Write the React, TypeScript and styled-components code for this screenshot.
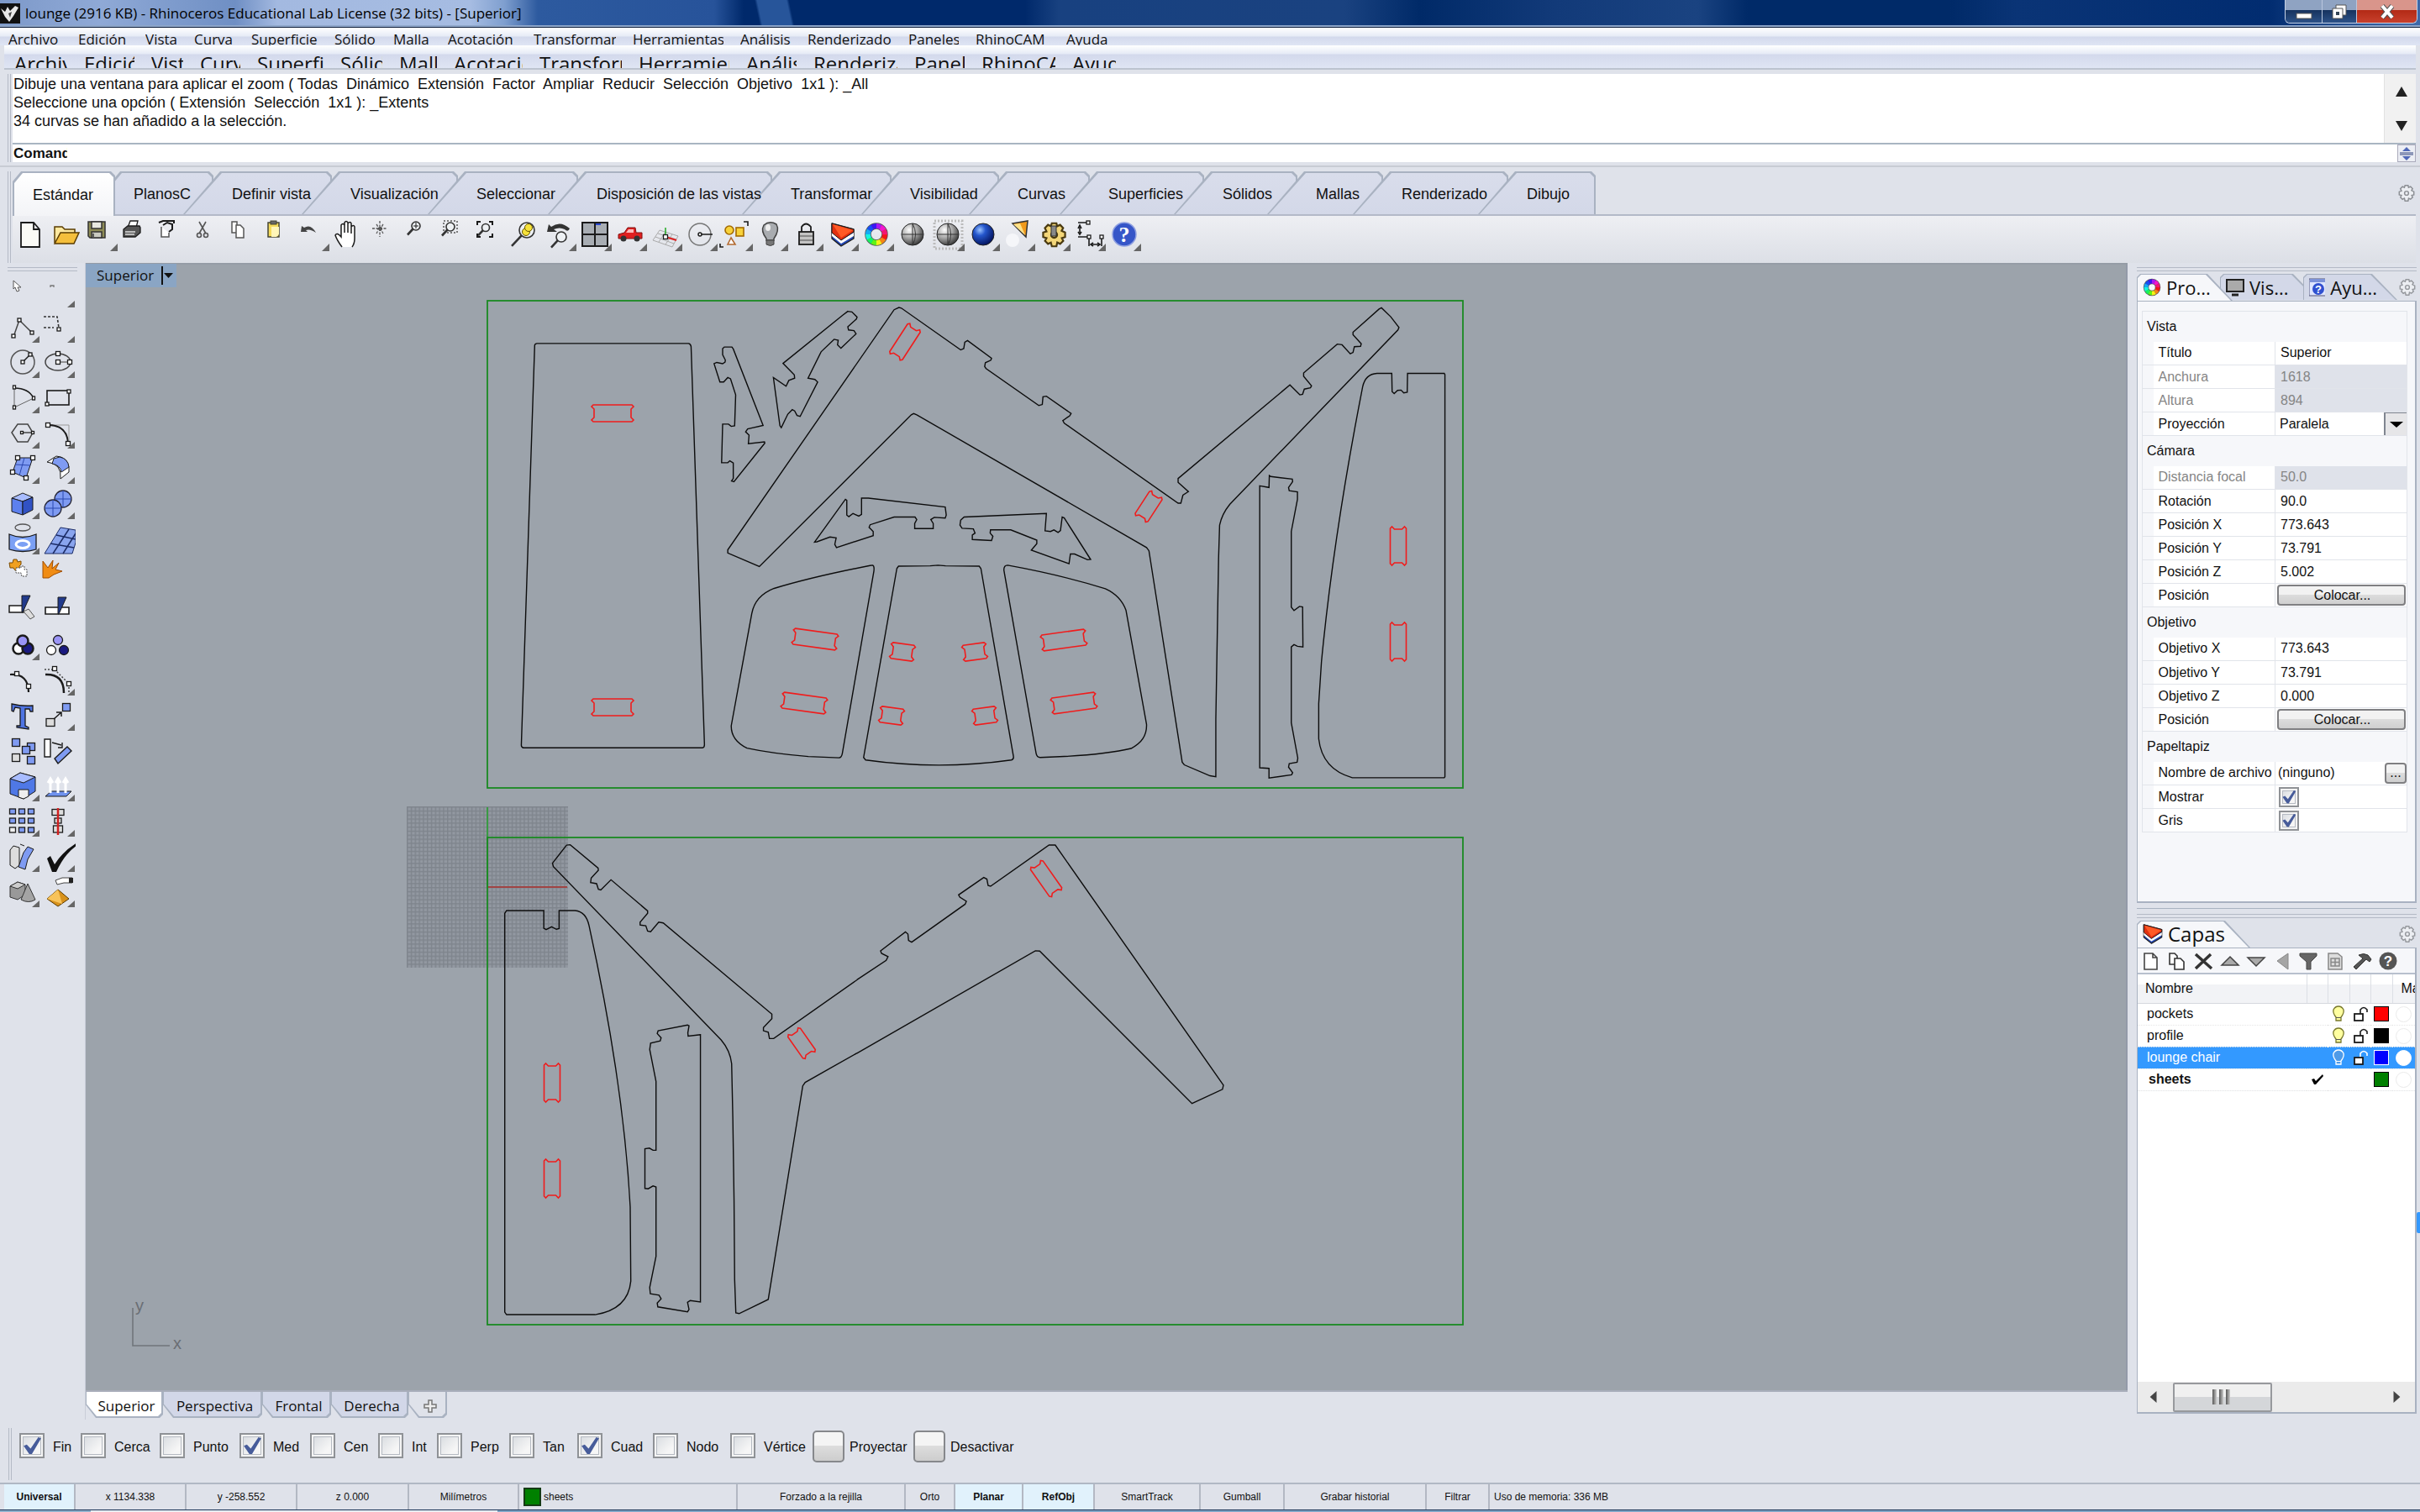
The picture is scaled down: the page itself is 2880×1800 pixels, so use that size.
import React from "react";
import styled, { createGlobalStyle, css } from "styled-components";

const sans = `"Liberation Sans", Arial, sans-serif`;
const ui = `"Open Sans", "Noto Sans", sans-serif`;
const edge = "#a9b2c1";
const face = "#dfe2ea";

const Global = createGlobalStyle`
  * { box-sizing: border-box; }
  html, body { margin: 0; background: ${face}; }
  body { font-family: ${sans}; font-size: 16px; color: #111; overflow: hidden; }
  button, input, select { font: inherit; color: inherit; margin: 0; padding: 0; border: 0; background: none; border-radius: 0; }
  svg { display: block; }
`;

const Page = styled.div`
  min-height: 100vh;
  display: flex;
  flex-direction: column;
  background: ${face};
  position: relative;
`;

/* ---------- title bar ---------- */

const TitleBar = styled.header`
  height: 33px;
  display: flex;
  align-items: center;
  gap: 6px;
  font: 17px/24px ${ui};
  color: #000;
  border-bottom: 1px solid #10203c;
  box-shadow: inset 0 -2px 0 #8ea6c9;
  background:
    linear-gradient(78deg, transparent 885px, #27559a 888px, #27559a 922px, transparent 925px),
    linear-gradient(90deg, #7d99c9 0, #8fa9d6 120px, #6f8fc4 280px, #a3b9e0 330px, #a6bce2 560px, #7f9fcf 600px, #2d5a9f 640px, #27539a 850px, #00296b 885px, #00296b 1220px, #184180 1260px, #1a4280 1600px, #002a68 1690px, #123a79 1850px, #1a4381 2020px, #002a68 2080px, #002a68 2320px, #0a3476 2400px, #012c70 2700px, #3d68a8 2860px);
`;
const Title = styled.h1`
  flex: 1;
  margin: 0;
  font: inherit;
  white-space: nowrap;
`;
const WindowButtons = styled.div`
  align-self: flex-start;
  display: flex;
  height: 28px;
  margin-right: 3px;
  border: 1px solid #c6d2e6;
  border-top: 0;
  border-radius: 0 0 6px 6px;
  overflow: hidden;
`;
const WindowButton = styled.button<{ $w: number; $close?: boolean }>`
  width: ${(p) => p.$w}px;
  display: grid;
  place-items: center;
  border-left: 1px solid #b9c7de;
  background: ${(p) =>
    p.$close
      ? "linear-gradient(#d9958b 0 45%, #b32a16 46%, #c8402c)"
      : "linear-gradient(#8fa3c2 0 45%, #16335f 46%, #2d5288)"};
  &:first-child { border-left: 0; }
`;

/* ---------- menus ---------- */

const MenuBar = styled.nav<{ $ghost?: boolean }>`
  display: flex;
  align-items: flex-start;
  overflow: hidden;
  white-space: nowrap;
  background: linear-gradient(#ffffff 0, #e6ebf6 10px, #d3d9ec 11px, #dfe5f4 100%);
  ${(p) =>
    p.$ghost
      ? css`
          height: 29px;
          margin: 0 5px;
          padding-left: 12px;
          border-bottom: 2px solid #bcc3cf;
          font: 24px/43px ${ui};
        `
      : css`
          height: 21px;
          padding-left: 10px;
          font: 17px/28px ${ui};
        `}
`;
const MenuItem = styled.button<{ $w: number }>`
  width: ${(p) => p.$w}px;
  flex: none;
  text-align: left;
  padding-right: 20px;
`;
const MenuClip = styled.span`
  display: block;
  overflow: hidden;
`;

/* ---------- command area ---------- */

const Dock = styled.section`
  display: flex;
  padding: 5px 5px 4px 9px;
  gap: 2px;
  border-bottom: 2px solid #c8ccd4;
`;
const Grip = styled.div<{ $row?: boolean }>`
  ${(p) =>
    p.$row
      ? css`height: 5px; border-top: 1px solid #b4bac6; border-bottom: 1px solid #b4bac6;`
      : css`width: 4px; border-left: 1px solid #b4bac6; border-right: 1px solid #b4bac6;`}
  flex: none;
`;
const CommandBox = styled.div`
  flex: 1;
  background: #fff;
  font-size: 18px;
`;
const History = styled.div`
  display: flex;
  height: 84px;
  border-bottom: 2px solid #a9b5c2;
`;
const Log = styled.div`
  flex: 1;
  padding: 1px 1px 0;
  line-height: 22px;
  white-space: pre;
`;
const ScrollRail = styled.div`
  width: 38px;
  background: #f1f1f1;
  border-left: 1px solid #e2e2e2;
  display: flex;
  flex-direction: column;
  justify-content: space-between;
  align-items: center;
  padding: 13px 0 12px 2px;
`;
const CommandLine = styled.div`
  display: flex;
  height: 21px;
  line-height: 22px;
  padding-left: 1px;
  label { width: 64px; overflow: hidden; font-weight: bold; font-size: 17px; }
  input { flex: 1; outline: 0; }
`;
const Stepper = styled.button`
  width: 22px;
  border: 1px solid #aab;
  background: #eceef4;
  display: grid;
  place-items: center;
`;

/* ---------- tabbed toolbar ---------- */

const ToolDock = styled.section`
  display: flex;
  padding: 5px 5px 0 9px;
  gap: 2px;
  position: relative;
`;
const ToolBody = styled.div`
  flex: 1;
  min-width: 0;
`;
const Tabs = styled.div`
  display: flex;
  align-items: stretch;
  height: 53px;
  border-bottom: 2px solid #b3b9c8;
`;
const Tab = styled.button<{ $w: number; $active?: boolean; $second?: boolean }>`
  position: relative;
  flex: none;
  width: ${(p) => p.$w}px;
  padding: 3px 0 0 ${(p) => (p.$active ? 24 : 22)}px;
  text-align: left;
  font-size: 18px;
  white-space: nowrap;
  ${(p) => p.$active && css`margin-bottom: -2px; z-index: 2;`}
  span { position: relative; z-index: 1; }
  &::before, &::after {
    content: "";
    position: absolute;
    inset: 0 0 0 ${(p) => (p.$active ? 0 : p.$second ? -4 : -36)}px;
    background: ${edge};
    --s: ${(p) => (p.$active || p.$second ? 10 : 44)}px;
    --b: ${(p) => (p.$active || p.$second ? "12px" : "100%")};
    clip-path: polygon(0 100%, 0 var(--b), var(--s) 0, calc(100% - 5px) 0, 100% 5px, 100% 100%);
  }
  &::after {
    top: 2px;
    right: 2px;
    margin-left: 2px;
    background: ${(p) => (p.$active ? "linear-gradient(#fff, #f3f4f7)" : "linear-gradient(#d9ddeb, #d3d8e8)")};
  }
`;
const Spacer = styled.div`flex: 1;`;
const IconButton = styled.button`
  display: grid;
  place-items: center;
  flex: none;
`;
const IconRow = styled.div`
  display: flex;
  height: 56px;
  align-items: flex-start;
  background: linear-gradient(#eeeff3, #dcdfe6);
`;

/* ---------- workspace ---------- */

const Workspace = styled.main`
  flex: 1;
  display: flex;
  min-height: 0;
`;
const SideTools = styled.aside`
  width: 102px;
  padding: 5px 9px 0;
  border-right: 1px solid #c9cdd8;
`;
const ToolGrid = styled.div`
  display: grid;
  grid-template-columns: 42px 42px;
  grid-auto-rows: 42px;
  margin: 3px -3px 0;
`;
const ViewColumn = styled.div`
  flex: 1;
  min-width: 0;
  display: flex;
  flex-direction: column;
`;
const Viewport = styled.div`
  flex: 1;
  position: relative;
  background: #9ca3ab;
  border-bottom: 2px solid #a8adba;
  box-shadow: inset 0 2px 0 #959ca6, inset -2px 0 0 #939aa8;
  overflow: hidden;
`;
const Drawing = styled.svg`
  position: absolute;
  inset: 0;
  width: 2430px;
  height: 1344px;
`;
const ViewName = styled.button`
  position: absolute;
  left: 0;
  top: 1px;
  height: 28px;
  width: 108px;
  display: flex;
  align-items: center;
  gap: 9px;
  padding-left: 13px;
  background: #8aa5c4;
  font: 17px/24px ${ui};
`;
const ViewTabs = styled.div`
  display: flex;
  height: 33px;
`;
const ViewTab = styled.button<{ $w: number; $tone: string }>`
  position: relative;
  width: ${(p) => p.$w}px;
  height: 31px;
  font: 17px/24px ${ui};
  padding: 3px 0 0 5px;
  &::before, &::after {
    content: "";
    position: absolute;
    inset: 0;
    background: ${edge};
    clip-path: polygon(0 0, 100% 0, 100% calc(100% - 4px), calc(100% - 4px) 100%, 12px 100%, 0 50%);
  }
  &::after { inset: 0 2px 2px 1px; background: ${(p) => p.$tone}; }
  span, svg { position: relative; z-index: 1; margin: auto; }
`;

/* ---------- right panels ---------- */

const Panels = styled.aside`
  width: 348px;
  padding: 5px 4px 7px 11px;
  display: flex;
  flex-direction: column;
`;
const Panel = styled.section<{ $grow?: boolean }>`
  display: flex;
  flex-direction: column;
  ${(p) => (p.$grow ? css`flex: 1; min-height: 0;` : css`height: 764px; border-bottom: 1px solid ${edge}; padding-bottom: 6px; margin-bottom: 6px;`)}
`;
const PanelTabs = styled.div<{ $pad: number }>`
  display: flex;
  margin-top: ${(p) => p.$pad}px;
  height: 32px;
  z-index: 1;
`;
const PanelTab = styled.button<{ $w: number; $z: number; $active?: boolean; $big?: boolean; $tail: number }>`
  position: relative;
  z-index: ${(p) => p.$z};
  width: ${(p) => p.$w}px;
  height: ${(p) => (p.$active ? 32 : 31)}px;
  padding-left: 7px;
  display: flex;
  align-items: center;
  gap: 6px;
  white-space: nowrap;
  font: ${(p) => (p.$big ? 24 : 22)}px/30px ${ui};
  &::before, &::after {
    content: "";
    position: absolute;
    inset: 0 ${(p) => -p.$tail}px 0 0;
    background: ${edge};
    clip-path: polygon(0 4px, 4px 0, calc(100% - 30px) 0, 100% 100%, 0 100%);
  }
  &::after { top: 1px; left: 1px; margin-right: 2px; background: ${(p) => (p.$active ? "#f6f7fa" : "#d3d8e8")}; }
  > * { position: relative; z-index: 1; }
`;
const PanelBody = styled.div`
  flex: 1;
  display: flex;
  flex-direction: column;
  min-height: 0;
  border: 1px solid ${edge};
  border-width: 1px 2px 2px 1px;
  background: #f6f7fa;
`;
const Props = styled.table`
  width: calc(100% - 14px);
  margin: 11px 9px 0 5px;
  border-collapse: collapse;
  table-layout: fixed;
  background: #fff;
  border: 1px solid #e1e4ea;
  td, th { padding: 0; font-weight: normal; text-align: left; white-space: nowrap; }
`;
const Group = styled.tr`
  height: 36px;
  background: #f6f7fa;
  th { padding-left: 5px; }
`;
const Prop = styled.tr<{ $off?: boolean }>`
  height: 28px;
  border-bottom: 1px solid #e1e4ea;
  color: ${(p) => (p.$off ? "#858585" : "#111")};
  td:first-child { background: #f6f7fa; }
  th { padding-left: 6px; border-right: 1px solid #e1e4ea; }
  td:last-child { background: ${(p) => (p.$off ? "#dfe2ea" : "#fff")}; }
`;
const Field = styled.input`
  display: block;
  width: 100%;
  height: 24px;
  padding-left: 6px;
  outline: 0;
`;
const FileField = styled.input`
  flex: 1;
  width: 0;
  min-width: 0;
  height: 24px;
  padding-left: 3px;
  outline: 0;
`;
const Cell = styled.div`
  display: flex;
  align-items: center;
  height: 27px;
`;
const TickPad = styled.span`
  padding-left: 4px;
`;
const Choice = styled.select`
  appearance: none;
  flex: 1;
  height: 26px;
  padding-left: 5px;
  outline: 0;
`;
const Drop = styled.span`
  width: 27px;
  height: 27px;
  display: grid;
  place-items: center;
  background: #e6e6e8;
  border-left: 2px solid #808590;
  border-top: 1px solid #808590;
`;
const Push = styled.button<{ $small?: boolean }>`
  height: 25px;
  border: 2px solid #7f7f82;
  border-radius: 4px;
  line-height: 20px;
  background: linear-gradient(#f2f2f2 0 48%, #dcdcdc 50%, #cfcfcf);
  ${(p) => (p.$small ? css`width: 26px;` : css`flex: 1; margin: 0 1px 0 2px; padding-left: 2px;`)}
`;
const Tick = styled.input<{ $size: number }>`
  appearance: none;
  width: ${(p) => p.$size}px;
  height: ${(p) => p.$size}px;
  flex: none;
  display: block;
  position: relative;
  border: 2px solid #8f9296;
  box-shadow: inset 0 0 0 2px #f4f4f4, inset 0 0 0 3px #b5bac2;
  background: linear-gradient(135deg, #d5d9de, #f6f6f6 70%);
  &:checked::before {
    content: "";
    position: absolute;
    inset: 12% 8% 10% 12%;
    background: #475c9a;
    clip-path: polygon(0 50%, 18% 42%, 40% 66%, 84% 0, 100% 6%, 46% 100%, 32% 98%);
  }
`;

const LayerTools = styled.div`
  display: flex;
  height: 31px;
  padding-left: 1px;
  border-bottom: 2px solid #b8c0cd;
`;
const LayerTable = styled.table`
  border-collapse: collapse;
  table-layout: fixed;
  width: 100%;
  th { height: 34px; padding: 0; font-weight: normal; text-align: left; background: linear-gradient(#fff 0 35%, #f2f3f6 36%); border-right: 1px solid #dcdfe5; border-bottom: 1px solid #d5d8de; overflow: hidden; white-space: nowrap; }
  th:first-child { padding-left: 9px; }
  th:last-child { padding-left: 10px; border-right: 0; }
  td { padding: 0; height: 26px; border-bottom: 1px dotted #e6e6e6; }
  td svg { margin: auto; }
`;
const LayerRow = styled.tr<{ $sel?: boolean; $current?: boolean }>`
  background: ${(p) => (p.$sel ? "#3399ff" : "#fff")};
  color: ${(p) => (p.$sel ? "#fff" : "#111")};
  font-weight: ${(p) => (p.$current ? "bold" : "normal")};
  td:first-child { padding-left: ${(p) => (p.$current ? 13 : 11)}px; }
`;
const Swatch = styled.span<{ $c: string; $w: number; $h: number; $line?: string }>`
  display: block;
  width: ${(p) => p.$w}px;
  height: ${(p) => p.$h}px;
  margin: 0 auto;
  background: ${(p) => p.$c};
  border: 1px solid ${(p) => p.$line || "#000"};
`;
const Dot = styled.span<{ $on?: boolean }>`
  display: block;
  width: 19px;
  height: 19px;
  margin-left: 4px;
  border-radius: 50%;
  border: 1px solid ${(p) => (p.$on ? "#fff" : "#ebebeb")};
  background: #fff;
`;
const LayerFill = styled.div`
  flex: 1;
  background: #fff;
`;
const HScroll = styled.div`
  height: 36px;
  background: #ebebeb;
  display: flex;
  align-items: center;
  padding: 0 15px 0 12px;
`;
const Thumb = styled.div`
  width: 118px;
  height: 35px;
  margin-left: 16px;
  border: 2px solid #97999d;
  border-radius: 2px;
  background: linear-gradient(#f0f0f0 0 48%, #d4d6d9 50%);
  display: flex;
  gap: 3px;
  align-items: center;
  justify-content: center;
  padding-right: 4px;
  i { width: 5px; height: 18px; background: linear-gradient(90deg, #555, #ccc); }
`;

/* ---------- bottom bars ---------- */

const SnapBar = styled.section`
  display: flex;
  padding: 10px 0 3px 10px;
  height: 75px;
  gap: 9px;
`;
const SnapList = styled.div`
  display: flex;
  align-items: flex-start;
  padding-top: 3px;
`;
const Snap = styled.div<{ $w: number }>`
  width: ${(p) => p.$w}px;
  display: flex;
  align-items: center;
  gap: 10px;
  margin-top: 3px;
  height: 30px;
  white-space: nowrap;
  label { padding-top: 3px; }
`;
const SnapPush = styled.div<{ $w: number }>`
  width: ${(p) => p.$w}px;
  display: flex;
  align-items: center;
  gap: 6px;
  height: 38px;
  white-space: nowrap;
  label { padding-top: 1px; }
  button {
    width: 38px;
    height: 38px;
    border: 2px solid #86888c;
    border-radius: 5px;
    background: linear-gradient(#f4f4f4 0 46%, #dddddd 48%, #cdcdcd);
  }
`;
const StatusBar = styled.footer`
  display: flex;
  height: 33px;
  padding-left: 5px;
  border-top: 2px solid #b0b8c4;
  border-bottom: 1px solid #1b3558;
  font-size: 12px;
`;
const StatusCell = styled.button<{ $w: number; $on?: boolean; $left?: boolean }>`
  width: ${(p) => p.$w}px;
  display: flex;
  align-items: center;
  gap: 3px;
  justify-content: ${(p) => (p.$left ? "flex-start" : "center")};
  padding-left: ${(p) => (p.$left ? 5 : 0)}px;
  white-space: nowrap;
  border-right: 2px solid #b3b8c3;
  font-weight: ${(p) => (p.$on ? "bold" : "normal")};
  background: ${(p) => (p.$on ? "#e1f2fc" : "transparent")};
  &:last-child { border-right: 0; }
  ${Swatch} { margin: 0; border-width: 2px; }
`;
const TaskEdge = styled.div`
  height: 2px;
  background: linear-gradient(90deg, #8fb1cc 0 108px, #e9eef3 108px 592px, #7fa5c6 592px);
`;
const GhostMark = styled.div`
  position: absolute;
  right: 0;
  top: 1443px;
  width: 4px;
  height: 25px;
  background: #3399ff;
  border-radius: 2px 0 0 2px;
`;

/* ---------- icons ---------- */

const K = "#1b1b1b";
const hues = [0, 30, 60, 100, 140, 175, 200, 225, 250, 280, 310, 335];
const Wheel = ({ cx, cy, r, s }: { cx: number; cy: number; r: number; s: number }) => (
  <g fill="none" strokeWidth={s}>
    <circle cx={cx} cy={cy} r={r} stroke="#555" strokeWidth={s + 1.5} />
    {hues.map((h, i) => (
      <circle key={h} cx={cx} cy={cy} r={r} stroke={`hsl(${h} 90% 52%)`} pathLength={12} strokeDasharray="1.05 10.95" strokeDashoffset={-i} />
    ))}
  </g>
);
const LayerMark = () => (
  <g strokeLinejoin="round">
    <path d="M9 9 35 16V27L20 36 9 27Z" fill="#2448b4" stroke={K} strokeWidth="1.300" />
    <path d="M9 19 20 29 35 20V24L20 33 9 24Z" fill="#fff" />
    <path d="M9 9 35 16V19L20 29 9 20Z" fill="#e03010" stroke={K} />
    <path d="M10 10 34 17 20 26Z" fill="#ff5a26" />
  </g>
);
const Gear = ({ size, c, fill = "none" }: { size: number; c: string; fill?: string }) => (
  <svg width={size} height={size} viewBox="0 0 24 24" fill={fill} stroke={c} strokeWidth="1.6">
    <path d="M10 2h4l.6 2.6 2.6-1.2 2.6 2.7-1.3 2.4L21.500 10v4l-2.800.8 1.200 2.500-2.700 2.600-2.500-1.200L14 22h-4l-.8-3.300-2.500 1.200-2.600-2.600 1.300-2.500L2.500 14v-4l2.900-.9L4 6.200l2.700-2.800 2.500 1.200Z" />
    <circle cx="12" cy="12" r="2.600" />
  </svg>
);
const sq = (x: number, y: number, f = "#fff", w = 5, h = 5) => <rect x={x - w / 2} y={y - h / 2} width={w} height={h} fill={f} stroke={K} strokeWidth="1.300" />;
const lens = (x: number, y: number, r: number) => (
  <g fill="none" stroke="#333" strokeWidth="1.600">
    <circle cx={x} cy={y} r={r} fill="#eef1f4" />
    <path d={`M${x - r * 0.7} ${y + r * 0.7} ${x - r * 2} ${y + r * 2.100}`} strokeWidth="2.600" />
  </g>
);
const ball = (id: string, wire: boolean) => (
  <g>
    <circle cx="21" cy="22" r="13" fill={`url(#${id})`} stroke="#222" />
    {wire && <path d="M21 9V35M8 22H34M21 9q7 13 0 26" fill="none" stroke="#333" strokeWidth="1" />}
  </g>
);

const topIcons: { name: string; menu?: boolean; art: React.ReactNode }[] = [
  { name: "Nuevo", art: <path d="M10 8H25L32 16V37H10ZM25 8V16H32" fill="#fbfbf6" stroke={K} strokeWidth="1.800" /> },
  { name: "Abrir", art: <g stroke="#5a3c00" strokeWidth="1.500"><path d="M8 32V13h9l3 3h12v5" fill="#ffe9a0" /><path d="M8 33 15 20H37L31 33Z" fill="#f5bf3c" /></g> },
  { name: "Guardar", menu: true, art: <g stroke="#333" strokeWidth="1.500"><path d="M6 7H26V26H8L6 24Z" fill="#8d8b55" /><path d="M10 7H22V15H10Z" fill="#e8e8e0" /><path d="M10 19H22V26H10Z" fill="#c9c9c0" /><path d="M12 21v4" /></g> },
  { name: "Imprimir", art: <g stroke={K} strokeWidth="1.300"><path d="M11 14 14 6H23L21 14" fill="#fff" /><path d="M6 16 11 12H25L26 14V20L20 25H6Z" fill="#555" /><path d="M8 19H20M8 22H19" stroke="#ddd" /></g> },
  { name: "Propiedades", art: <g stroke="#555" fill="none" strokeWidth="1.500"><path d="M9 13V25H18V20" fill="#fff" /><path d="M6 8 11 6H24V9M11 11 16 8 22 10 22 16 18 19" stroke={K} strokeWidth="2" /></g> },
  { name: "Cortar", art: <g stroke="#555" fill="none" strokeWidth="1.600"><path d="M12 7 20 21M20 7 12 21" /><circle cx="12" cy="23" r="2.500" /><circle cx="20" cy="23" r="2.500" /></g> },
  { name: "Copiar", art: <g stroke="#555" fill="#fff" strokeWidth="1.500"><path d="M9 7H15V20H9Z" /><path d="M14 11H19L23 15V26H14Z" /></g> },
  { name: "Pegar", art: <g stroke="#443"><rect x="10" y="8" width="13" height="17" fill="#f6dc5c" strokeWidth="1.500" /><rect x="13" y="6" width="7" height="4" fill="#666" /><path d="M14 13H23V22L20 25H14Z" fill="#fff6b8" stroke="none" /></g> },
  { name: "Deshacer", menu: true, art: <path d="M7 19 8 12 11 14Q19 9 25 20 18 15 13 17L15 19Z" fill="#444" /> },
  { name: "Encuadrar", art: <path d="M14 37Q8 29 6 23 8 19 13 25V11Q15 8 17 11V20 8Q19 5 21 8V20 9Q24 6 25 9V21 13Q28 10 29 13V27Q29 33 26 37" fill="#fff" stroke={K} strokeWidth="1.500" /> },
  { name: "Rotar", art: <g stroke="#555" fill="none"><path d="M17 6V25M8 15H26M13 10q4 5 0 11M21 10q-4 5 0 11" strokeWidth="1.300" strokeDasharray="3 1.500" /><path d="M15 15h5M17.500 13v5" strokeWidth="2.500" /></g> },
  { name: "Zoom", art: <g>{lens(18, 12, 5)}<path d="M18 8v7M15 12h6" stroke={K} /></g> },
  { name: "Zoom ventana", art: <g><rect x="9" y="6" width="16" height="14" fill="none" stroke="#555" strokeDasharray="2 2" strokeWidth="1.500" />{lens(17, 13, 5)}</g> },
  { name: "Zoom extensión", art: <g>{lens(17, 14, 4.500)}<path d="M7 11V7H11M21 7H25V11M7 21V25H11M21 25H25V21" fill="none" stroke={K} strokeWidth="2" /></g> },
  { name: "Zoom selección", art: <g>{lens(24, 17, 9)}<circle cx="23" cy="19" r="4.500" fill="#f6e23a" stroke="#665500" /><circle cx="26" cy="14" r="4.500" fill="#f6e23a" stroke="#665500" /></g> },
  { name: "Vista anterior", menu: true, art: <g><path d="M6 19 8 10 11 13Q22 5 33 15 31 20 27 16 21 13 14 16L18 19Z" fill="#333" />{lens(23, 25, 6)}</g> },
  { name: "Cuatro vistas", menu: true, art: <g stroke={K} strokeWidth="2"><rect x="6" y="8" width="30" height="28" fill="#a8adb3" /><path d="M21 8V36M6 22H36" /><path d="M22 10H28" stroke="#2746d0" /></g> },
  { name: "Vista derecha", menu: true, art: <g><path d="M7 22 14 20 18 14H27L28 20H35V27H7Z" fill="#e02020" stroke="#801010" /><path d="M19 16H25V20H16Z" fill="#fbb" /><circle cx="13" cy="27" r="3.500" fill="#333" /><circle cx="29" cy="27" r="3.500" fill="#333" /></g> },
  { name: "Plano C", menu: true, art: <g fill="none"><path d="M6 29 14 17 36 24 29 37ZM9 25 31 33M12 21 34 28M13 31 21 19M21 34 29 22" stroke="#aaa" /><path d="M21 25V14" stroke="#2a2" strokeWidth="1.500" /><path d="M21 25 34 29" stroke="#d22" strokeWidth="2" />{sq(21, 25)}</g> },
  { name: "Círculo", menu: true, art: <g fill="none" stroke="#777" strokeWidth="1.500"><circle cx="20" cy="22" r="13" /><path d="M20 22H35" stroke={K} /><circle cx="20" cy="22" r="2" fill="#fff" stroke={K} /></g> },
  { name: "Seleccionar", menu: true, art: <g strokeWidth="1.600"><circle cx="13" cy="17" r="5" fill="#f7d23a" stroke="#a36a00" /><rect x="21" y="14" width="9" height="10" fill="#f7d23a" stroke="#a36a00" /><path d="M15 26 11 34H20Z" fill="#fff" stroke="#b36a30" /><path d="M30 7H35V12M2 33V37H6" fill="none" stroke={K} /></g> },
  { name: "Luz", menu: true, art: <g stroke="#444"><path d="M15 27Q8 18 12 11 19 5 27 10 31 17 24 27V29H15Z" fill="#a9acb0" strokeWidth="1.500" /><path d="M15 29h9v5q-4 3-9 0Z" fill="#777" /><ellipse cx="17" cy="14" rx="3" ry="4" fill="#eee" stroke="none" /></g> },
  { name: "Bloquear", menu: true, art: <g stroke={K} strokeWidth="1.800"><path d="M15 20V13Q20 6 26 13V20" fill="none" /><rect x="12" y="19" width="17" height="15" fill="#c4c4c4" /><path d="M13 24H28M13 29H28" stroke="#888" /></g> },
  { name: "Capas", menu: true, art: <LayerMark /> },
  { name: "Color", menu: true, art: <Wheel cx={20} cy={22} r={10} s={6} /> },
  { name: "Sombreado", art: ball("gray", true) },
  { name: "Render", menu: true, art: <g><rect x="5" y="6" width="33" height="33" fill="none" stroke="#bbb" strokeDasharray="2 2" strokeWidth="3" />{ball("gray", true)}</g> },
  { name: "Material", menu: true, art: ball("blue", false) },
  { name: "Foco", menu: true, art: <g><circle cx="14" cy="29" r="8" fill="#f5f6f9" /><path d="M14 9 32 6 30 25Z" fill="#f09a1c" stroke="#333" strokeWidth="1.500" /><path d="M15 10 23 9 29 23Z" fill="#ffe28a" /></g> },
  { name: "Opciones", menu: true, art: <g><g transform="translate(5 6)"><Gear size={33} c="#4a3a10" fill="#f3d679" /></g><rect x="18" y="12" width="6" height="12" fill="#888" stroke="#333" /></g> },
  { name: "Acotar", menu: true, art: <g fill="none" stroke={K} strokeWidth="1.600"><path d="M8 8H19M10 12V21M8 25H21V36M36 25V36M24 34H33" />{sq(20, 8, "#fff", 4, 4)}{sq(21, 25, "#fff", 4, 4)}{sq(36, 25, "#fff", 4, 4)}<path d="M8 15 10 11 12 15M8 19 10 22 12 19M26 32 23 34 26 36M31 32 34 34 31 36" /></g> },
  { name: "Ayuda", menu: true, art: <g><circle cx="21" cy="22" r="14" fill="#3656c8" stroke="#8fa0e0" strokeWidth="1.500" /><text x="21" y="31" textAnchor="middle" fontFamily="Liberation Serif, serif" fontWeight="bold" fontSize="26" fill="#fff">?</text></g> },
];

const B = "#7f9bf2";
const sideIcons: { name: string; menu?: boolean; art: React.ReactNode }[] = [
  { name: "Puntero", art: <path d="M10 8 10 18 12 16 14 21 17 20 15 16 19 16Z" fill="#fff" stroke="#555" /> },
  { name: "Punto", menu: true, art: <path d="M12 16v-2h4v2" fill="none" stroke="#777" strokeWidth="1.300" /> },
  { name: "Polilínea", menu: true, art: <g fill="none" stroke="#444" strokeWidth="1.500"><path d="M10 33 17 13 32 28" />{sq(10, 32, "#fff", 4, 4)}{sq(17, 13, "#fff", 4, 4)}{sq(32, 28, "#fff", 4, 4)}</g> },
  { name: "Curva", menu: true, art: <g fill="none" stroke="#333"><path d="M4 9H20L22 22M4 22H16" strokeDasharray="3 2" strokeWidth="1.600" />{sq(22, 24, "#fff", 4, 4)}</g> },
  { name: "Círculo", menu: true, art: <g fill="none" stroke="#555" strokeWidth="1.500"><circle cx="21" cy="21" r="14" /><path d="M21 21 30 12" stroke={K} />{sq(21, 21, "#fff", 4, 4)}{sq(30, 12, "#fff", 4, 4)}</g> },
  { name: "Elipse", menu: true, art: <g fill="none" stroke="#444" strokeWidth="1.500"><ellipse cx="21" cy="21" rx="15" ry="10" /><path d="M21 21H34" stroke="#777" />{sq(21, 21)}{sq(21, 11)}{sq(35, 21)}</g> },
  { name: "Arco", menu: true, art: <g fill="none" stroke="#666"><path d="M11 10V33L34 22" /><path d="M11 10Q28 10 34 22" stroke={K} strokeWidth="1.600" />{sq(11, 9, "#fff", 3, 4)}{sq(11, 33, "#fff", 3, 4)}{sq(34, 22, "#fff", 3, 4)}</g> },
  { name: "Rectángulo", menu: true, art: <g><rect x="8" y="13" width="26" height="17" fill="none" stroke={K} strokeWidth="1.600" />{sq(34, 14, "#fff", 4, 4)}{sq(8, 29, "#fff", 4, 4)}</g> },
  { name: "Polígono", menu: true, art: <g fill="none" stroke="#444" strokeWidth="1.500"><path d="M8 21 15 11H27L33 21 27 32H15Z" /><path d="M20 21H33" />{sq(20, 21, "#fff", 3, 3)}{sq(33, 21, "#fff", 3, 3)}</g> },
  { name: "Empalme", menu: true, art: <g fill="none"><path d="M9 12H34V34" stroke="#999" /><path d="M9 12Q32 12 33 34" stroke={K} strokeWidth="2" />{sq(9, 12)}{sq(33, 34)}</g> },
  { name: "Superficie", menu: true, art: <g stroke={K}><path d="M15 9 33 9 25 33 9 26Z" fill={B} /><path d="M12 17 30 18M23 9 17 30" stroke="#2b48b0" />{sq(15, 9)}{sq(33, 9)}{sq(9, 26)}{sq(25, 33)}</g> },
  { name: "Extruir", menu: true, art: <g stroke={K}><path d="M8 14 19 7Q32 8 34 20V26L24 34Q26 16 8 14Z" fill="#fff" /><path d="M16 10 23 8Q33 10 34 20L25 26Q24 18 14 16Z" fill={B} /></g> },
  { name: "Caja", menu: true, art: <g stroke={K}><path d="M8 15 21 9 33 14 21 19Z" fill="#a8bcff" /><path d="M8 15 21 19V35L8 31Z" fill="#5d80ee" /><path d="M21 19 33 14V29L21 35Z" fill="#3152c4" /></g> },
  { name: "Esferas", menu: true, art: <g stroke="#223" strokeWidth="1.300"><circle cx="27" cy="16" r="10" fill={B} /><circle cx="15" cy="27" r="10" fill={B} /><path d="M17 16h20M27 6v20M5 27h20M15 17v20" stroke="#2b48b0" strokeWidth="1" /></g> },
  { name: "Proyectar", menu: true, art: <g stroke={K} strokeWidth="1.300"><ellipse cx="21" cy="8" rx="9" ry="4" fill="none" stroke="#555" /><path d="M5 16Q21 23 37 16V34Q21 39 5 34Z" fill="#7ba0f4" /><ellipse cx="21" cy="28" rx="8" ry="4.500" fill="none" stroke="#fff" strokeWidth="3" /></g> },
  { name: "Malla", art: <g stroke="#1c2c66"><path d="M5 39 24 8 42 11V26L38 39Z" fill="#89a4ee" /><path d="M12 27 40 32M19 17 42 22M15 39 34 10M27 39 42 15" fill="none" strokeWidth="1.500" /></g> },
  { name: "Unir", art: <g><path d="M5 8h4l1-4h4l1 3 4-1v4l-2 2v4l-5 1-2-3H6Z" fill="#f0a020" stroke="#7a4a00" /><path d="M13 14h6v-2h4v4h3v8h-6l-1-4h-6Z" fill="#fff" stroke="#555" strokeDasharray="2 1" /></g> },
  { name: "Descomponer", art: <path d="M3 26 3 6 9 14 15 5 14 15 22 8 18 16 26 18 16 22 10 26Z" fill="#f08c14" stroke="#a04c00" /> },
  { name: "Recortar", art: <g stroke={K}><path d="M5 17H22V25H5Z" fill="#fff" strokeWidth="1.500" /><path d="M22 24 28 21 35 30 30 33Z" fill="#ddd" stroke="#555" /><path d="M20 5H30L21 25H20Z" fill="#213a8c" /></g> },
  { name: "Partir", art: <g stroke={K}><path d="M6 19H34V27H6Z" fill="#fff" strokeWidth="1.600" /><path d="M21 7H31L22 27H21Z" fill="#213a8c" /></g> },
  { name: "Agrupar", menu: true, art: <g stroke={K} strokeWidth="2.500"><circle cx="16" cy="26" r="6.500" fill="#fff" /><circle cx="27" cy="26" r="6.500" fill="#1a1a80" /><circle cx="21" cy="17" r="6.500" fill="#9a94f5" /></g> },
  { name: "Desagrupar", art: <g stroke={K} strokeWidth="1.300"><circle cx="13" cy="28" r="5.500" fill="#fff" /><circle cx="28" cy="28" r="5.500" fill="#1a1a80" /><circle cx="21" cy="16" r="5.500" fill="#9a94f5" /></g> },
  { name: "Puntos", art: <g fill="none"><path d="M6 15Q28 14 28 36" stroke={K} strokeWidth="2.200" />{sq(14, 14)}{sq(28, 29)}</g> },
  { name: "Puntos de control", menu: true, art: <g fill="none"><path d="M6 15Q28 14 28 37" stroke={K} strokeWidth="2.500" /><path d="M5 9H17L34 26V37" stroke="#444" strokeDasharray="2 2" strokeWidth="1.500" />{sq(17, 8)}{sq(34, 26)}</g> },
  { name: "Texto", art: <path d="M8 8Q20 11 33 10L33 17 30 17 29 14 24 14V34L28 36V38L14 36V34L18 34V13L12 12 10 17 8 16Z" fill="#4f74e2" stroke={K} strokeWidth="1.300" /> },
  { name: "Mover", menu: true, art: <g stroke={K}>{sq(12, 30, "#ddd", 10, 9)}{sq(31, 12, B, 9, 9)}<path d="M16 26 25 18M25 23V18H19" fill="none" strokeWidth="1.500" /></g> },
  { name: "Copiar objetos", art: <g>{sq(13, 12, B, 9, 9)}{sq(31, 17, B, 9, 9)}{sq(25, 21, B, 9, 9)}{sq(13, 30, "#ddd", 9, 9)}{sq(31, 33, B, 9, 9)}</g> },
  { name: "Girar", art: <g stroke={K} strokeWidth="1.400"><path d="M5 8H12V29H5Z" fill="#fff" /><path d="M17 31 32 17 37 22 21 37Z" fill={B} /><path d="M14 12 25 15M21 18H26V12" fill="none" /></g> },
  { name: "Sólido", menu: true, art: <g stroke={K}><path d="M6 13 18 6 36 11V28L22 37 6 31Z" fill="#4f78e6" /><path d="M6 13 18 6 36 11 22 18Z" fill="#a8bcff" /><path d="M16 26H28V34L22 37 16 35Z" fill="#eee" /></g> },
  { name: "Analizar", menu: true, art: <g><path d="M6 34 13 28H37L31 34Z" fill="#6f92ee" stroke={K} /><path d="M12 30V15M21 30V15M30 30V15M9 18 12 13 15 18M18 18 21 13 24 18M27 18 30 13 33 18" fill="none" stroke="#fff" strokeWidth="3" /></g> },
  { name: "Matriz", menu: true, art: <g>{[0, 1, 2].map((r) => [0, 1, 2].map((c) => <React.Fragment key={`${r}${c}`}>{sq(9 + c * 11, 10 + r * 11, r === 2 && c === 0 ? "#eee" : B, 7, 6)}</React.Fragment>))}</g> },
  { name: "Alinear", menu: true, art: <g>{sq(21, 11, "#ddd", 14, 7)}{sq(21, 21, "#ddd", 8, 6)}{sq(21, 31, "#ddd", 11, 8)}<path d="M21 6V38" stroke="#d02020" strokeWidth="2.500" /></g> },
  { name: "Deformar", menu: true, art: <g stroke={K}><path d="M6 14 10 9 17 11V32L12 36 6 32Z" fill="#ddd" /><path d="M16 34 22 17 27 10 34 13 27 25 24 37Z" fill={B} /><path d="M18 7 23 9" /></g> },
  { name: "Comprobar", menu: true, art: <path d="M8 24 12 21 17 31Q27 15 44 5L44 8Q29 18 19 40L14 40Z" fill="#111" /> },
  { name: "Formas", menu: true, art: <g stroke="#333"><path d="M6 15 15 10 24 13V25L15 31 6 28Z" fill="#999" /><path d="M6 15 15 10 24 13 15 18Z" fill="#ccc" /><path d="M27 12 36 31Q28 36 19 31Z" fill="#a4a4a4" /></g> },
  { name: "Orden", menu: true, art: <g><path d="M8 30 21 19 34 30 21 39Z" fill="#d8921c" stroke="#5a3a00" /><path d="M8 30 21 19 26 36Z" fill="#f7c35a" /><path d="M18 8 26 5H38V11H28L20 13Z" fill="#fff" stroke="#444" /><path d="M34 5H39V11H34Z" fill="#222" /></g> },
];

const layerIcons: { name: string; art: React.ReactNode }[] = [
  { name: "Nueva capa", art: <path d="M7 6H17L22 11V25H7ZM17 6V11H22" fill="#fff" stroke="#444" strokeWidth="1.600" /> },
  { name: "Nueva subcapa", art: <g fill="#fff" stroke="#333" strokeWidth="1.600"><path d="M6 6H12L15 9V19H6Z" /><path d="M12 12H19L23 16V25H12Z" /></g> },
  { name: "Eliminar", art: <path d="M6 7 25 24M24 7 6 24" stroke="#333" strokeWidth="3.500" /> },
  { name: "Subir", art: <path d="M6 20 16 10 26 20Z" fill="#aaa" stroke="#444" strokeWidth="1.500" /> },
  { name: "Bajar", art: <path d="M6 11 16 21 26 11Z" fill="#aaa" stroke="#444" strokeWidth="1.500" /> },
  { name: "Subir nivel", art: <path d="M23 6V25L10 15Z" fill="#a5a5a5" stroke="#888" /> },
  { name: "Filtrar", art: <path d="M6 6H26V9L19 16V25H14V16L6 9Z" fill="#666" stroke="#444" /> },
  { name: "Tabla", art: <g stroke="#888" fill="#ddd" strokeWidth="1.500"><path d="M9 6H20L25 10V25H9Z" /><path d="M12 12H22V21H12ZM12 16.500H22M17 12V21" /></g> },
  { name: "Herramientas", art: <path d="M8 22 19 12 14 8Q20 5 25 8L29 13 27 16 23 13 11 25Z" fill="#555" stroke="#333" /> },
  { name: "Ayuda", art: <g><circle cx="18" cy="15" r="10.500" fill="#555" /><text x="18" y="21" textAnchor="middle" fontFamily="Liberation Sans, sans-serif" fontWeight="bold" fontSize="17" fill="#fff">?</text></g> },
];

const GradientHost = styled.svg`
  position: absolute;
  width: 0;
  height: 0;
`;
const Defs = () => (
  <GradientHost>
    <defs>
      <radialGradient id="gray" cx=".35" cy=".3" r=".75"><stop offset="0" stopColor="#fff" /><stop offset=".5" stopColor="#a5a5a5" /><stop offset="1" stopColor="#333" /></radialGradient>
      <radialGradient id="blue" cx=".35" cy=".3" r=".75"><stop offset="0" stopColor="#9cc4ff" /><stop offset=".35" stopColor="#2456cc" /><stop offset="1" stopColor="#021058" /></radialGradient>
    </defs>
  </GradientHost>
);

/* ---------- drawing ---------- */

/* Each group of parts keeps the units of the panel it was digitised in. */
const units = {
  a: "translate(560 340) scale(.40816 .38265)",
  b: "translate(1140 340) scale(.40816 .38265)",
  c: "translate(460 940) scale(.35714 .42092)",
  d: "translate(900 980) scale(.3699 .38265)",
};
const parts: [keyof typeof units, string][] = [
  ["a", "M187 186Q188 180 194 180H636Q642 182 643 190L682 1428Q682 1437 676 1438H154Q148 1436 148 1430Z"],
  ["a", "M735 196 740 191H762L766 197 853 435 808 446 802 455 812 465 810 492 857 486 858 490 768 610 761 608 766 600V552L756 545 750 551H732L735 431H752L760 438 770 436 773 340 758 290 750 286 738 300H727L710 243 718 239 735 243 742 238 743 232 735 215Z"],
  ["a", "M1100 80 1112 82 1127 98 1125 104 1100 128 1102 138 1118 140 1124 150 1080 195 1070 184 1072 170 1060 167 1022 206 984 288 1004 292 1012 300 961 407 952 404 945 390 938 386 925 400 906 442 902 436 883 286 920 313 928 295 945 288 944 278 911 242 1085 92Z"],
  ["a", "M1003 798 1093 665 1097 668V714L1103 719 1115 709 1132 717 1140 712V661H1160L1384 689 1387 714 1384 723 1352 721 1342 728 1349 740V756H1295V740L1301 728 1296 720H1235L1165 744 1162 752 1174 765V778L1067 815 1062 805 1066 785 1048 782 1010 797Z"],
  ["a", "M1172 870Q1178 872 1176 888L1084 1455Q1082 1468 1074 1469L985 1465Q880 1456 806 1439 760 1415 760 1370L820 1020Q830 965 885 942 1000 905 1165 871Z"],
  ["a", "M1243 880 1248 873 1340 872 1363 870 1385 872 1483 873 1488 880 1583 1465Q1584 1474 1577 1476 1366 1508 1152 1476L1146 1468Z"],
  ["b", "M134 885Q134 870 145 870 300 900 430 943 475 965 490 1010L550 1365Q552 1415 505 1440 420 1462 240 1468 230 1467 228 1455Z"],
  ["b", "M8 730 18 720 258 709 254 763 270 765 280 760 292 768 299 762 304 720 310 723 387 852 378 853 340 835 328 835 324 865 214 823 230 803V792L154 760H95L94 770 102 780 98 793 42 790V776L50 770 45 757 12 755 6 745Z"],
  ["b", "M-671 822V832L-579 874-136 402-129 398-120 402 550 815 557 825 654 1483 660 1491 735 1525 752 1528V1350L760 850 763 745Q770 710 793 680L1283 138 1286 130 1262 97 1235 69 1228 73 1152 145V153L1176 181 1174 189 1156 190 1152 208 1144 212 1120 184 1106 182 1008 272V282L1031 312 1028 318 1010 322 1005 338 997 340 968 309 642 600V612L672 641 656 652 650 677H642L310 428 306 420 326 405 330 398 258 344 248 346 246 370 236 373 82 258 78 252 80 240 96 232 98 226 28 171 20 176 17 196 8 200-165 70-172 68-186 75Z"],
  ["b", "M880 623 907 628 908 591 912 594 975 602 976 610 964 628 966 638 990 642V665L972 765V1000L980 1011 996 998 1005 1000 1006 1124 990 1122 980 1117 972 1124V1360L991 1470 989 1483 966 1487 964 1498 976 1515 973 1522 907 1532V1502L880 1500Z"],
  ["b", "M1418 273H1311L1310 332 1300 334 1292 325 1282 326 1272 336 1266 330 1265 273H1222Q1188 275 1180 315 1095 780 1060 1170L1052 1300V1410Q1062 1505 1150 1531H1418L1420 1528V277Z"],
  ["c", "M400 342H524V392L532 396 550 388 566 395 575 393V342H628Q665 345 675 385 790 830 812 1180L814 1390Q805 1470 695 1485H400L394 1478V350Z"],
  ["c", "M1046 693 1005 697 1004 688 1008 668 1003 666 905 682 902 690 915 702 912 711 880 717 877 735 898 825V1020H888L876 1014 861 1016V1128L872 1129 888 1121 898 1124V1320L877 1408 879 1426 908 1430 915 1440 902 1452 904 1463 1003 1477 1008 1470 1003 1450 1012 1445 1046 1449Z"],
  ["c", "M1568 745 1395 828 1387 838 1272 1442 1175 1482 1164 1480 1160 1385 1158 1160 1154 930 1150 775Q1145 738 1115 708L556 218 553 208 600 157 612 156 705 222 706 228 682 250 680 263 700 266 706 282 714 284 748 255 870 343V350L845 375V383L864 385 870 400 880 402 907 375 922 377 1284 635V648L1256 673V682L1272 686 1276 704H1290L1568 538"],
  ["d", "M324 487 418 427 424 415 403 405 400 397 480 338 488 345 490 365 500 370 672 252 676 243 655 230 651 223 732 169 742 174 746 194 754 196 942 68H962L1503 815 1500 828 1402 872 912 398 898 397 324 716"],
];
const pockets: [number, number, number, number, number][] = [
  [729, 492, 50, 20, 0], [729, 842, 50, 20, 0],
  [970, 761, 54, 19, 8], [957, 837, 54, 19, 8],
  [1074, 776, 29, 19, 8], [1061, 852, 29, 19, 8],
  [1160, 776, 29, 19, -8], [1172, 852, 29, 19, -8],
  [1266, 762, 54, 19, -8], [1278, 837, 54, 19, -8],
  [1077, 407, 43, 18, -57], [1367, 603, 35, 18, -57],
  [1664, 650, 46, 19, 90], [1664, 764, 46, 19, 90],
  [657, 1289, 46, 19, 90], [657, 1403, 46, 19, 90],
  [954, 1242, 35, 18, 55], [1245, 1046, 43, 18, 55],
];
const pocketPath = (w: number, h: number) => {
  const a = w / 2;
  const b = h / 2;
  return `M${2 - a} ${-b}H${a - 2}L${a} ${2 - b} ${a - 3} ${5 - b}V${b - 5}L${a} ${b - 2} ${a - 2} ${b}H${2 - a}L${-a} ${b - 2} ${3 - a} ${b - 5}V${5 - b}L${-a} ${2 - b}Z`;
};

const Sheets = () => (
  <Drawing viewBox="102 313 2430 1344">
    <defs>
      <pattern id="mesh" x="484" y="960" width="4.800" height="4.800" patternUnits="userSpaceOnUse">
        <rect width="4.800" height="4.800" fill="#9298a1" />
        <path d="M0 .7H4.800M.7 0V4.800" stroke="#7f858d" strokeWidth="1.500" />
      </pattern>
    </defs>
    <rect x="484" y="960" width="192" height="192" fill="url(#mesh)" />
    <path d="M580 961V1056" stroke="#3a9a44" strokeWidth="2" />
    <path d="M580 1056H675" stroke="#a04444" strokeWidth="2" />
    <g fill="none" stroke="#1a8a22" strokeWidth="1.800">
      <rect x="580" y="358" width="1161" height="580" />
      <rect x="580" y="997" width="1161" height="580" />
    </g>
    <g fill="none" stroke="#0c0c0c" strokeWidth="1.400">
      {parts.map(([u, d], i) => (
        <path key={i} transform={units[u]} d={d} vectorEffect="non-scaling-stroke" />
      ))}
    </g>
    <g fill="none" stroke="#f01c1c" strokeWidth="1.600">
      {pockets.map(([x, y, w, h, r], i) => (
        <path key={i} transform={`translate(${x} ${y}) rotate(${r})`} d={pocketPath(w, h)} />
      ))}
    </g>
    <path d="M158 1557V1602H202" fill="none" stroke="#70757b" strokeWidth="1.600" />
    <g fill="#6a6e74" fontFamily="Liberation Sans, sans-serif" fontSize="20">
      <text x="161" y="1561">y</text>
      <text x="206" y="1606">x</text>
    </g>
  </Drawing>
);

/* ---------- content ---------- */

const menus: [string, number][] = [
  ["Archivo", 83], ["Edición", 80], ["Vista", 58], ["Curva", 68], ["Superficie", 99], ["Sólido", 70], ["Malla", 65],
  ["Acotación", 102], ["Transformar", 118], ["Herramientas", 128], ["Análisis", 80], ["Renderizado", 120], ["Paneles", 80], ["RhinoCAM", 108], ["Ayuda", 72],
];
const tabs: [string, number][] = [
  ["Estándar", 122], ["PlanosC", 117], ["Definir vista", 141], ["Visualización", 150], ["Seleccionar", 143], ["Disposición de las vistas", 231],
  ["Transformar", 142], ["Visibilidad", 128], ["Curvas", 108], ["Superficies", 136], ["Sólidos", 111], ["Mallas", 102], ["Renderizado", 149], ["Dibujo", 104],
];
const snaps: [string, number, boolean][] = [
  ["Fin", 73, true], ["Cerca", 94, false], ["Punto", 95, false], ["Med", 84, true], ["Cen", 81, false], ["Int", 70, false],
  ["Perp", 86, false], ["Tan", 81, false], ["Cuad", 90, true], ["Nodo", 92, false], ["Vértice", 98, false],
];
const statuses: [string, number, boolean?][] = [
  ["Universal", 85, true], ["x 1134.338", 132], ["y -258.552", 132], ["z 0.000", 133], ["Milímetros", 131], ["sheets", 260], ["Forzado a la rejilla", 200],
  ["Orto", 59], ["Planar", 81, true], ["RefObj", 85, true], ["SmartTrack", 126], ["Gumball", 100], ["Grabar historial", 169], ["Filtrar", 75], ["Uso de memoria: 336 MB", 160],
];
const layers = [
  { name: "pockets", color: "#ff0000" },
  { name: "profile", color: "#000000" },
  { name: "lounge chair", color: "#0000ff", sel: true },
  { name: "sheets", color: "#008000", current: true },
];
type Row = { group?: string; label?: string; value?: string; off?: boolean; kind?: string };
const rows: Row[] = [
  { group: "Vista" },
  { label: "Título", value: "Superior" },
  { label: "Anchura", value: "1618", off: true },
  { label: "Altura", value: "894", off: true },
  { label: "Proyección", value: "Paralela", kind: "select" },
  { group: "Cámara" },
  { label: "Distancia focal", value: "50.0", off: true },
  { label: "Rotación", value: "90.0" },
  { label: "Posición X", value: "773.643" },
  { label: "Posición Y", value: "73.791" },
  { label: "Posición Z", value: "5.002" },
  { label: "Posición", value: "Colocar...", kind: "push" },
  { group: "Objetivo" },
  { label: "Objetivo X", value: "773.643" },
  { label: "Objetivo Y", value: "73.791" },
  { label: "Objetivo Z", value: "0.000" },
  { label: "Posición", value: "Colocar...", kind: "push" },
  { group: "Papeltapiz" },
  { label: "Nombre de archivo", value: "(ninguno)", kind: "file" },
  { label: "Mostrar", kind: "tick" },
  { label: "Gris", kind: "tick" },
];

const Tri = ({ d, s = 16, c = "#222" }: { d: string; s?: number; c?: string }) => (
  <svg width={s} height={s} viewBox="0 0 16 16"><path d={d} fill={c} /></svg>
);

const PropValue = ({ row, id }: { row: Row; id: string }) => {
  if (row.kind === "select")
    return (
      <Cell>
        <Choice id={id} defaultValue={row.value}><option>{row.value}</option></Choice>
        <Drop><Tri d="M0 5H16L8 12Z" c="#000" /></Drop>
      </Cell>
    );
  if (row.kind === "push") return <Cell><Push id={id} type="button">{row.value}</Push></Cell>;
  if (row.kind === "file") return <Cell><FileField id={id} defaultValue={row.value} /><Push $small type="button">...</Push></Cell>;
  if (row.kind === "tick") return <Cell><TickPad><Tick $size={24} type="checkbox" id={id} defaultChecked /></TickPad></Cell>;
  return <Field id={id} defaultValue={row.value} disabled={row.off} />;
};

const Bulb = ({ sel }: { sel?: boolean }) => (
  <svg width="16" height="20" viewBox="0 0 16 20"><path d="M5 14Q1 9 2 5 4 1 8 1T14 5Q15 9 11 14V18H5Z" fill={sel ? "#4f9be8" : "#ffffa0"} stroke={sel ? "#fff" : "#77772a"} strokeWidth="1.300" /><path d="M5 14.500H11" stroke={sel ? "#fff" : "#555"} /></svg>
);
const Lock = ({ sel }: { sel?: boolean }) => (
  <svg width="20" height="20" viewBox="0 0 20 20"><path d="M10 10V5Q14 0 18 5V8" fill="none" stroke={sel ? "#fff" : K} strokeWidth="1.600" /><rect x="3" y="10" width="10" height="8" fill="#fff" stroke={K} strokeWidth="1.800" /></svg>
);

export default function App() {
  return (
    <Page>
      <Global />
      <Defs />
      <TitleBar>
        <svg width="24" height="24" viewBox="0 0 24 24"><rect width="24" height="24" fill="#111" /><path d="M1 6 6 10 9 4 12 9 18 3 22 5 16 15 11 22 6 16Z" fill="#e8e8e8" /><path d="M10 12 14 10 12 17Z" fill="#444" /></svg>
        <Title>lounge (2916 KB) - Rhinoceros Educational Lab License (32 bits) - [Superior]</Title>
        <WindowButtons>
          <WindowButton $w={43} aria-label="Minimizar"><svg width="20" height="20"><rect x="1" y="12" width="18" height="6" fill="#fff" stroke="#555" /></svg></WindowButton>
          <WindowButton $w={41} aria-label="Restaurar"><svg width="20" height="20"><path d="M6 2H18V14H6Z" fill="#fff" stroke="#555" /><path d="M2 6H14V18H2Z" fill="#fff" stroke="#555" /><path d="M6 10H10V14H6Z" fill="#345" /></svg></WindowButton>
          <WindowButton $w={72} $close aria-label="Cerrar"><svg width="20" height="20"><path d="M4 3 16 17M16 3 4 17" stroke="#555" strokeWidth="6" /><path d="M4 3 16 17M16 3 4 17" stroke="#fff" strokeWidth="4" /></svg></WindowButton>
        </WindowButtons>
      </TitleBar>

      <MenuBar>{menus.map(([m, w]) => <MenuItem key={m} $w={w}><MenuClip>{m}</MenuClip></MenuItem>)}</MenuBar>
      <MenuBar $ghost aria-hidden>{menus.map(([m, w]) => <MenuItem key={m} $w={w} tabIndex={-1}><MenuClip>{m}</MenuClip></MenuItem>)}</MenuBar>

      <Dock>
        <Grip />
        <CommandBox>
          <History>
            <Log>{"Dibuje una ventana para aplicar el zoom ( Todas  Dinámico  Extensión  Factor  Ampliar  Reducir  Selección  Objetivo  1x1 ): _All\nSeleccione una opción ( Extensión  Selección  1x1 ): _Extents\n34 curvas se han añadido a la selección."}</Log>
            <ScrollRail><Tri d="M8 2 15 14H1Z" /><Tri d="M1 2H15L8 14Z" /></ScrollRail>
          </History>
          <CommandLine>
            <label htmlFor="cmd">Comando:</label>
            <input id="cmd" />
            <Stepper aria-label="Historial"><svg width="18" height="16"><path d="M9 0 14 5H4ZM9 16 14 11H4Z" fill="#4f68b8" /><path d="M1 8H17" stroke="#8c96b8" strokeWidth="4" /></svg></Stepper>
          </CommandLine>
        </CommandBox>
      </Dock>

      <ToolDock>
        <Grip />
        <ToolBody>
          <Tabs role="tablist">
            {tabs.map(([t, w], i) => <Tab key={t} role="tab" $w={w} $active={i === 0} $second={i === 1}><span>{t}</span></Tab>)}
            <Spacer />
            <IconButton aria-label="Opciones de barra"><Gear size={22} c="#8c8f94" fill="#eceef2" /></IconButton>
          </Tabs>
          <IconRow>
            {topIcons.map((it) => (
              <IconButton key={it.name} aria-label={it.name}>
                <svg width="42" height="54" viewBox="0 0 42 54">{it.art}{it.menu && <path d="M41 33V42H32Z" fill="#666" />}</svg>
              </IconButton>
            ))}
          </IconRow>
        </ToolBody>
      </ToolDock>

      <Workspace>
        <SideTools>
          <Grip $row />
          <ToolGrid>
            {sideIcons.map((it) => (
              <IconButton key={it.name} aria-label={it.name}>
                <svg width="42" height="42" viewBox="0 0 42 42">{it.art}{it.menu && <path d="M41 32V40H32Z" fill="#666" />}</svg>
              </IconButton>
            ))}
          </ToolGrid>
        </SideTools>

        <ViewColumn>
          <Viewport>
            <Sheets />
            <ViewName>Superior<svg width="16" height="22"><path d="M1 0V22" stroke="#111" strokeWidth="2" /><path d="M3 8H14L8.500 14Z" fill="#111" /></svg></ViewName>
          </Viewport>
          <ViewTabs>
            <ViewTab $w={92} $tone="#fff"><span>Superior</span></ViewTab>
            <ViewTab $w={118} $tone="#d2d7e8"><span>Perspectiva</span></ViewTab>
            <ViewTab $w={82} $tone="#d2d7e8"><span>Frontal</span></ViewTab>
            <ViewTab $w={92} $tone="#d2d7e8"><span>Derecha</span></ViewTab>
            <ViewTab $w={46} $tone={face} aria-label="Nueva vista"><svg width="16" height="16"><path d="M6 1H10V6H15V10H10V15H6V10H1V6H6Z" fill="#eee" stroke="#777" strokeWidth="1.500" /></svg></ViewTab>
          </ViewTabs>
        </ViewColumn>

        <Panels>
          <Panel>
            <Grip $row />
            <PanelTabs $pad={3}>
              <PanelTab $w={99} $z={3} $active $tail={15}><svg width="22" height="22"><Wheel cx={11} cy={11} r={7} s={5} /></svg><span>Pro...</span></PanelTab>
              <PanelTab $w={99} $z={2} $tail={18}><svg width="22" height="22"><rect x="1" y="2" width="20" height="14" fill="#aaa" stroke="#222" strokeWidth="2" /><path d="M7 20H15" stroke="#222" strokeWidth="3" /></svg><span>Vis...</span></PanelTab>
              <PanelTab $w={88} $z={2} $tail={24}><svg width="22" height="22"><rect x="0" y="1" width="22" height="20" fill="#dfe6ff" stroke="#557" /><rect x="1" y="1" width="20" height="4" fill="#7d92d8" /><circle cx="11" cy="13" r="7" fill="#3050d0" /><text x="11" y="18" textAnchor="middle" fontFamily="Liberation Sans, sans-serif" fontWeight="bold" fontSize="13" fill="#fff">?</text></svg><span>Ayu...</span></PanelTab>
              <Spacer />
              <IconButton aria-label="Opciones del panel"><Gear size={22} c="#96999e" fill="#eceef2" /></IconButton>
            </PanelTabs>
            <PanelBody>
              <Props>
                <colgroup><col width="13" /><col width="145" /><col /></colgroup>
                <tbody>
                  {rows.map((r, i) =>
                    r.group ? (
                      <Group key={i}><th colSpan={3}>{r.group}</th></Group>
                    ) : (
                      <Prop key={i} $off={r.off}><td /><th><label htmlFor={`p${i}`}>{r.label}</label></th><td><PropValue row={r} id={`p${i}`} /></td></Prop>
                    )
                  )}
                </tbody>
              </Props>
            </PanelBody>
          </Panel>

          <Panel $grow>
            <Grip $row />
            <PanelTabs $pad={3}>
              <PanelTab $w={110} $z={3} $active $big $tail={25}><svg width="24" height="24" viewBox="8 8 28 29"><LayerMark /></svg><span>Capas</span></PanelTab>
              <Spacer />
              <IconButton aria-label="Opciones de capas"><Gear size={22} c="#96999e" fill="#eceef2" /></IconButton>
            </PanelTabs>
            <PanelBody>
              <LayerTools>
                {layerIcons.map((it) => <IconButton key={it.name} aria-label={it.name}><svg width="31" height="31" viewBox="0 0 31 31">{it.art}</svg></IconButton>)}
              </LayerTools>
              <LayerTable>
                <colgroup><col width="201" /><col width="25" /><col width="26" /><col width="25" /><col width="26" /><col /></colgroup>
                <thead><tr><th>Nombre</th><th /><th /><th /><th /><th>Material</th></tr></thead>
                <tbody>
                  {layers.map((l) => (
                    <LayerRow key={l.name} $sel={l.sel} $current={l.current}>
                      <td>{l.name}</td>
                      <td>{l.current && <svg width="16" height="14"><path d="M1 7 4 6 6 9 14 1 15 3 6 13 4 13Z" fill="#000" /></svg>}</td>
                      <td>{!l.current && <Bulb sel={l.sel} />}</td>
                      <td>{!l.current && <Lock sel={l.sel} />}</td>
                      <td><Swatch $c={l.color} $w={18} $h={18} $line={l.sel ? "#fff" : "#000"} /></td>
                      <td><Dot $on={l.sel} /></td>
                    </LayerRow>
                  ))}
                </tbody>
              </LayerTable>
              <LayerFill />
              <HScroll><Tri s={14} d="M12 0V16L3 8Z" c="#444" /><Thumb><i /><i /><i /></Thumb><Spacer /><Tri s={14} d="M4 0V16L13 8Z" c="#444" /></HScroll>
            </PanelBody>
          </Panel>
        </Panels>
      </Workspace>

      <SnapBar>
        <Grip />
        <SnapList>
          {snaps.map(([s, w, on]) => (
            <Snap key={s} $w={w}><Tick $size={30} type="checkbox" id={`s-${s}`} defaultChecked={on} /><label htmlFor={`s-${s}`}>{s}</label></Snap>
          ))}
          <SnapPush $w={120}><button id="proj" type="button" /><label htmlFor="proj">Proyectar</label></SnapPush>
          <SnapPush $w={120}><button id="off" type="button" /><label htmlFor="off">Desactivar</label></SnapPush>
        </SnapList>
      </SnapBar>

      <StatusBar>
        {statuses.map(([s, w, on]) => (
          <StatusCell key={s} $w={w} $on={on} $left={s === "sheets" || s.startsWith("Uso")}>
            {s === "sheets" && <Swatch $c="#008000" $w={21} $h={22} $line="#143a14" />}
            {s}
          </StatusCell>
        ))}
      </StatusBar>
      <TaskEdge />
      <GhostMark />
    </Page>
  );
}
